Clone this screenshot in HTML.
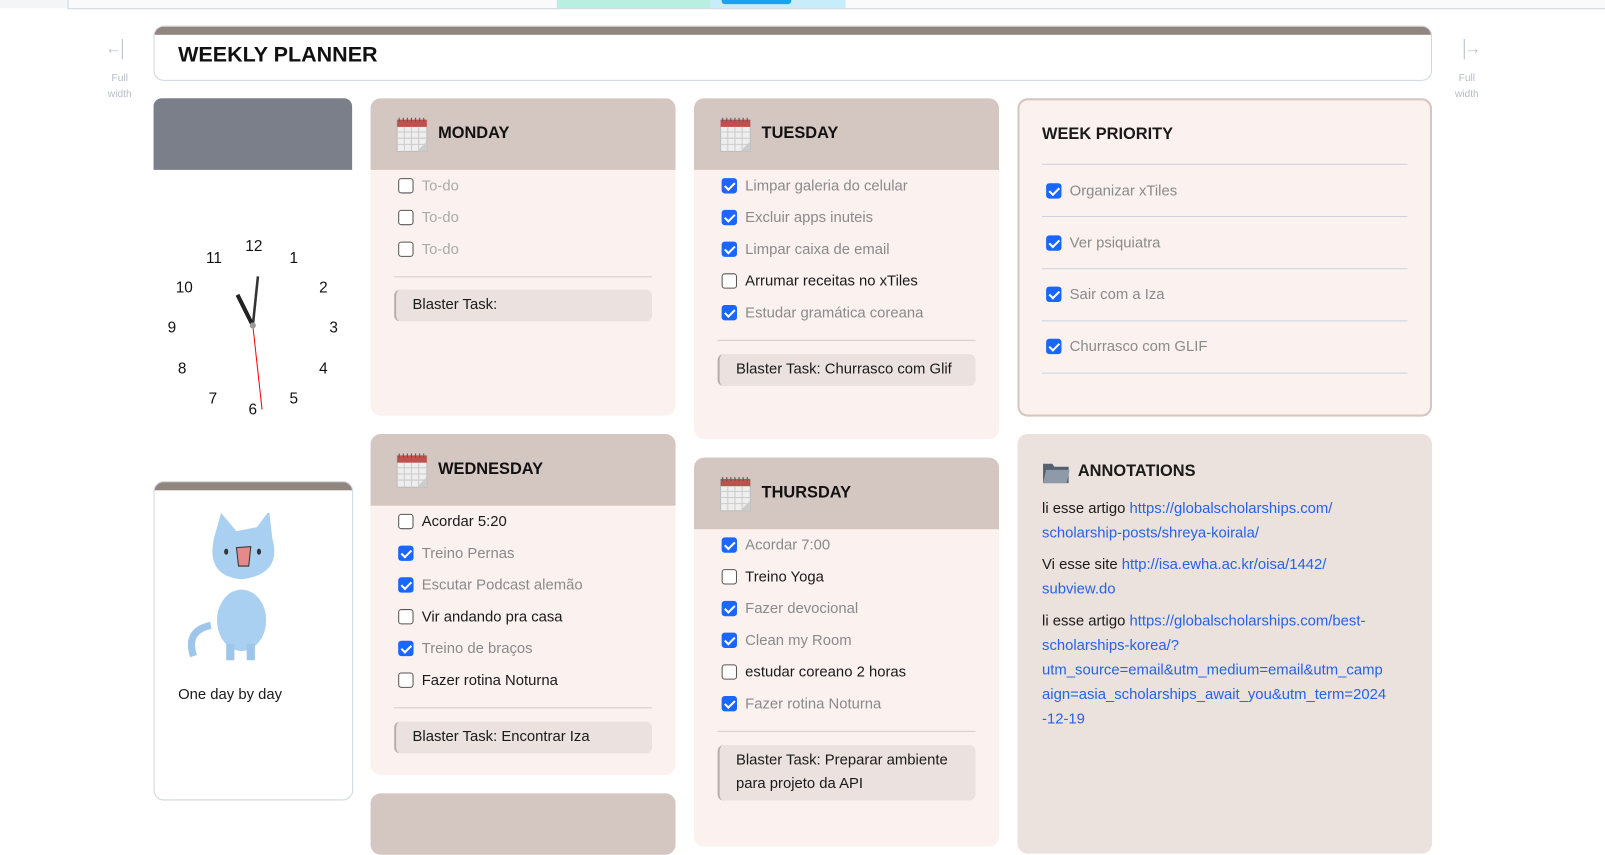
<!DOCTYPE html>
<html><head><meta charset="utf-8"><style>
*{box-sizing:border-box;margin:0;padding:0}
body{width:1605px;height:816px;overflow:hidden;background:#fff;font-family:"Liberation Sans",sans-serif;position:relative;color:#1a1a1a}
#w{position:absolute;left:0;top:0;width:1568px;height:800px;transform:scale(1.0236);transform-origin:0 0}
.a{position:absolute}
.card{position:absolute;border-radius:10px;background:#fbf1ee;overflow:hidden}
.hd{position:absolute;left:0;right:0;top:0;height:70px;background:#d4c6c0}
.ttl{position:absolute;left:66px;top:26px;font-size:16px;font-weight:bold;color:#111}
.cal{position:absolute;left:25px;top:17px;width:32px;height:36px}
.it{position:absolute;left:27px;font-size:14.5px;white-space:nowrap}
.cb{position:absolute;left:0;top:0;width:15px;height:15px;border:1.5px solid #555;border-radius:3px;background:#fff}
.cb.on{background:#1a66ff;border-color:#1a66ff}
.cb.on:after{content:"";position:absolute;left:4px;top:1px;width:4px;height:8px;border:solid #fff;border-width:0 2px 2px 0;transform:rotate(45deg)}
.it span{position:absolute;left:23px;top:0}
.it.d span{color:#8a8a8a}
.line{position:absolute;left:23px;right:23px;height:1px;background:#d5cdca}
.bl{position:absolute;left:23px;right:23px;background:#ebe1de;border-left:2px solid #b9aca8;border-radius:6px;font-size:14.5px;padding:4px 16px;line-height:23px}
a{color:#2563eb;text-decoration:none}
</style></head><body><div id="w">
<div class="a" style="left:0;top:0;width:1605px;height:8px;background:#f4f5f7"></div>
<div class="a" style="left:66px;top:0;width:1540px;height:9px;background:#fafafa;border:1px solid #d0d5de;border-top:none"></div>
<div class="a" style="left:544px;top:0;width:150px;height:8px;background:#b9efe0"></div>
<div class="a" style="left:694px;top:0;width:132px;height:8px;background:#c7ecfa"></div>
<div class="a" style="left:705px;top:0;width:68px;height:4px;background:#1aa3f0;border-radius:0 0 3px 3px"></div>

<div class="a" style="left:103px;top:38px;font-size:16px;color:#b6bcc6">←<span style="display:inline-block;width:1px;height:20px;background:#b6bcc6;vertical-align:middle"></span></div>
<div class="a" style="left:100px;top:69px;width:34px;text-align:center;font-size:10px;line-height:16px;color:#b6bcc6">Full width</div>
<div class="a" style="left:1430px;top:38px;font-size:16px;color:#b6bcc6"><span style="display:inline-block;width:1px;height:20px;background:#b6bcc6;vertical-align:middle"></span>→</div>
<div class="a" style="left:1416px;top:69px;width:34px;text-align:center;font-size:10px;line-height:16px;color:#b6bcc6">Full width</div>

<div class="a" style="left:150px;top:25px;width:1249px;height:54px;border:1px solid #d0d5de;border-radius:10px;overflow:hidden">
<div style="height:8px;background:#918580"></div>
<div style="position:absolute;left:23px;top:16px;font-size:21px;font-weight:bold;color:#111">WEEKLY PLANNER</div></div>

<div class="a" style="left:150px;top:96px;width:194px;height:70px;background:#7a7f89;border-radius:8px 8px 0 0"></div>
<svg class="a" style="left:150px;top:220px" width="200" height="200" font-family="Liberation Sans" font-size="15" fill="#111" text-anchor="middle">
<text x="98" y="25">12</text><text x="137" y="37">1</text><text x="166" y="66">2</text><text x="176" y="105">3</text><text x="166" y="145">4</text><text x="137" y="174">5</text><text x="97" y="185">6</text><text x="58" y="174">7</text><text x="28" y="145">8</text><text x="18" y="105">9</text><text x="30" y="66">10</text><text x="59" y="37">11</text>
<line x1="97" y1="98" x2="102" y2="50" stroke="#333" stroke-width="2.5"/>
<line x1="97" y1="98" x2="82" y2="68" stroke="#222" stroke-width="4"/>
<line x1="97" y1="98" x2="106" y2="180" stroke="red" stroke-width="1"/>
<circle cx="97" cy="98" r="3" fill="#999"/></svg>

<div class="a" style="left:150px;top:470px;width:195px;height:312px;border:1px solid #d0d5de;border-radius:10px;overflow:hidden">
<div style="height:8px;background:#918580"></div>
<svg style="position:absolute;left:30px;top:30px" width="110" height="150">
<path d="M25 110 Q0 115 8 140" stroke="#9ec6ea" stroke-width="7" fill="none"/>
<ellipse cx="55" cy="105" rx="24" ry="30" fill="#a9d0f0"/>
<path d="M28 25 L35 0 L50 18 L70 14 L82 -2 L85 25 Q95 60 55 65 Q20 62 28 25Z" fill="#a9d0f0"/>
<ellipse cx="40" cy="38" rx="2" ry="3" fill="#333"/><ellipse cx="72" cy="38" rx="2" ry="3" fill="#333"/>
<path d="M50 34 L64 33 L62 52 L52 52Z" fill="#e58a8a" stroke="#333"/>
<rect x="40" y="128" width="8" height="16" fill="#9ec6ea"/><rect x="60" y="128" width="8" height="16" fill="#9ec6ea"/></svg>
<div style="position:absolute;left:23px;top:200px;font-size:14.5px">One day by day</div></div>

<div class="card" style="left:362px;top:96px;width:298px;height:310px">
<div class="hd"></div>
<svg class="cal" viewBox="0 0 32 36"><rect x="1" y="4" width="29" height="31" fill="#eee" stroke="#bbb"/><rect x="1" y="4" width="29" height="7" fill="#c0504d"/><path d="M3 2v4M7 2v4M11 2v4M15 2v4M19 2v4M23 2v4M27 2v4" stroke="#555"/><path d="M1 16h29M1 22h29M1 28h29M8 11v24M15 11v24M22 11v24" stroke="#ccc"/><path d="M20 35 L30 25 L30 35Z" fill="#ccc"/></svg>
<div class="ttl">MONDAY</div>
<div class="it d" style="top:78px"><div class="cb"></div><span style="color:#aaa">To-do</span></div>
<div class="it d" style="top:109px"><div class="cb"></div><span style="color:#aaa">To-do</span></div>
<div class="it d" style="top:140px"><div class="cb"></div><span style="color:#aaa">To-do</span></div>
<div class="line" style="top:174px"></div>
<div class="bl" style="top:187px">Blaster Task:</div>
</div>

<div class="card" style="left:678px;top:96px;width:298px;height:333px">
<div class="hd"></div>
<svg class="cal" viewBox="0 0 32 36"><rect x="1" y="4" width="29" height="31" fill="#eee" stroke="#bbb"/><rect x="1" y="4" width="29" height="7" fill="#c0504d"/><path d="M3 2v4M7 2v4M11 2v4M15 2v4M19 2v4M23 2v4M27 2v4" stroke="#555"/><path d="M1 16h29M1 22h29M1 28h29M8 11v24M15 11v24M22 11v24" stroke="#ccc"/><path d="M20 35 L30 25 L30 35Z" fill="#ccc"/></svg>
<div class="ttl">TUESDAY</div>
<div class="it d" style="top:78px"><div class="cb on"></div><span>Limpar galeria do celular</span></div>
<div class="it d" style="top:109px"><div class="cb on"></div><span>Excluir apps inuteis</span></div>
<div class="it d" style="top:140px"><div class="cb on"></div><span>Limpar caixa de email</span></div>
<div class="it" style="top:171px"><div class="cb"></div><span>Arrumar receitas no xTiles</span></div>
<div class="it d" style="top:202px"><div class="cb on"></div><span>Estudar gramática coreana</span></div>
<div class="line" style="top:236px"></div>
<div class="bl" style="top:250px">Blaster Task: Churrasco com Glif</div>
</div>

<div class="card" style="left:362px;top:424px;width:298px;height:333px">
<div class="hd"></div>
<svg class="cal" viewBox="0 0 32 36"><rect x="1" y="4" width="29" height="31" fill="#eee" stroke="#bbb"/><rect x="1" y="4" width="29" height="7" fill="#c0504d"/><path d="M3 2v4M7 2v4M11 2v4M15 2v4M19 2v4M23 2v4M27 2v4" stroke="#555"/><path d="M1 16h29M1 22h29M1 28h29M8 11v24M15 11v24M22 11v24" stroke="#ccc"/><path d="M20 35 L30 25 L30 35Z" fill="#ccc"/></svg>
<div class="ttl">WEDNESDAY</div>
<div class="it" style="top:78px"><div class="cb"></div><span>Acordar 5:20</span></div>
<div class="it d" style="top:109px"><div class="cb on"></div><span>Treino Pernas</span></div>
<div class="it d" style="top:140px"><div class="cb on"></div><span>Escutar Podcast alemão</span></div>
<div class="it" style="top:171px"><div class="cb"></div><span>Vir andando pra casa</span></div>
<div class="it d" style="top:202px"><div class="cb on"></div><span>Treino de braços</span></div>
<div class="it" style="top:233px"><div class="cb"></div><span>Fazer rotina Noturna</span></div>
<div class="line" style="top:267px"></div>
<div class="bl" style="top:281px">Blaster Task: Encontrar Iza</div>
</div>

<div class="card" style="left:362px;top:775px;width:298px;height:60px"><div class="hd"></div></div>

<div class="card" style="left:678px;top:447px;width:298px;height:380px">
<div class="hd"></div>
<svg class="cal" viewBox="0 0 32 36"><rect x="1" y="4" width="29" height="31" fill="#eee" stroke="#bbb"/><rect x="1" y="4" width="29" height="7" fill="#c0504d"/><path d="M3 2v4M7 2v4M11 2v4M15 2v4M19 2v4M23 2v4M27 2v4" stroke="#555"/><path d="M1 16h29M1 22h29M1 28h29M8 11v24M15 11v24M22 11v24" stroke="#ccc"/><path d="M20 35 L30 25 L30 35Z" fill="#ccc"/></svg>
<div class="ttl">THURSDAY</div>
<div class="it d" style="top:78px"><div class="cb on"></div><span>Acordar 7:00</span></div>
<div class="it" style="top:109px"><div class="cb"></div><span>Treino Yoga</span></div>
<div class="it d" style="top:140px"><div class="cb on"></div><span>Fazer devocional</span></div>
<div class="it d" style="top:171px"><div class="cb on"></div><span>Clean my Room</span></div>
<div class="it" style="top:202px"><div class="cb"></div><span>estudar coreano 2 horas</span></div>
<div class="it d" style="top:233px"><div class="cb on"></div><span>Fazer rotina Noturna</span></div>
<div class="line" style="top:267px"></div>
<div class="bl" style="top:281px">Blaster Task: Preparar ambiente<br>para projeto da API</div>
</div>

<div class="card" style="left:994px;top:96px;width:405px;height:311px;border:2px solid #d4c6c0">
<div style="position:absolute;left:22px;top:25px;font-size:16px;font-weight:bold">WEEK PRIORITY</div>
<div class="line" style="top:62px;left:22px;right:22px;background:#ccd2e0"></div>
<div class="it d" style="top:81px;left:26px"><div class="cb on"></div><span>Organizar xTiles</span></div>
<div class="line" style="top:113px;left:22px;right:22px;background:#ccd2e0"></div>
<div class="it d" style="top:132px;left:26px"><div class="cb on"></div><span>Ver psiquiatra</span></div>
<div class="line" style="top:164px;left:22px;right:22px;background:#ccd2e0"></div>
<div class="it d" style="top:182px;left:26px"><div class="cb on"></div><span>Sair com a Iza</span></div>
<div class="line" style="top:215px;left:22px;right:22px;background:#ccd2e0"></div>
<div class="it d" style="top:233px;left:26px"><div class="cb on"></div><span>Churrasco com GLIF</span></div>
<div class="line" style="top:266px;left:22px;right:22px;background:#ccd2e0"></div>
</div>

<div class="card" style="left:994px;top:424px;width:405px;height:410px;background:#ebe1dd">
<svg style="position:absolute;left:24px;top:25px" width="28" height="24"><path d="M1 4h9l2 3h14v16H1Z" fill="#556070"/><path d="M4 10h23l-3 13H1Z" fill="#8f9aa8"/></svg>
<div style="position:absolute;left:59px;top:28px;font-size:16px;font-weight:bold">ANNOTATIONS</div>
<div style="position:absolute;left:24px;top:61px;width:370px;font-size:14.5px;line-height:24px;white-space:nowrap">
<p style="margin-bottom:7px">li esse artigo <a>https://globalscholarships.com/<br>scholarship-posts/shreya-koirala/</a></p>
<p style="margin-bottom:7px">Vi esse site <a>http://isa.ewha.ac.kr/oisa/1442/<br>subview.do</a></p>
<p>li esse artigo <a>https://globalscholarships.com/best-<br>scholarships-korea/?<br>utm_source=email&amp;utm_medium=email&amp;utm_camp<br>aign=asia_scholarships_await_you&amp;utm_term=2024<br>-12-19</a></p>
</div></div>
</div></body></html>
